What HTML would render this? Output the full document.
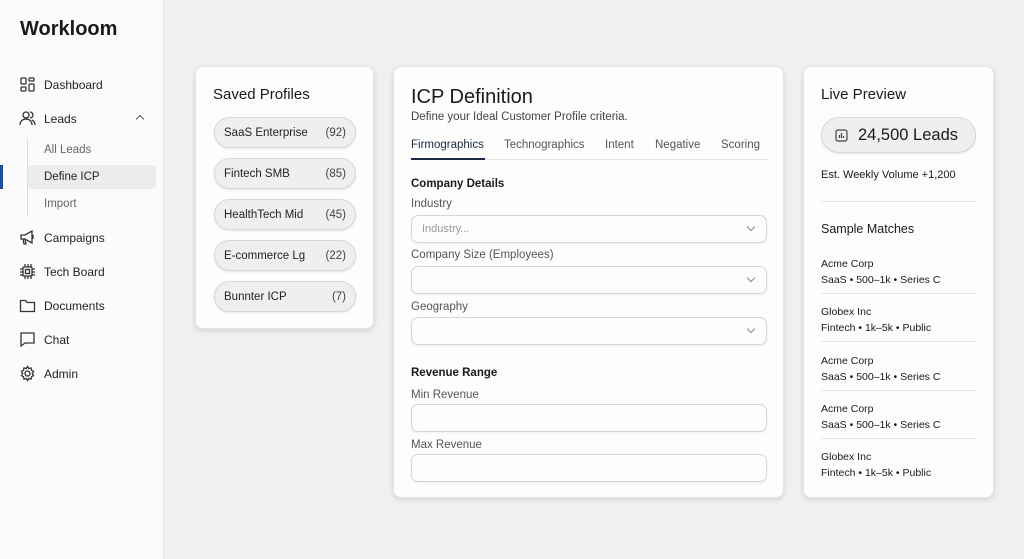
<!DOCTYPE html>
<html><head><meta charset="utf-8"><style>
*{box-sizing:border-box;margin:0;padding:0}
body{width:1024px;height:559px;overflow:hidden;background:#eef0f2;font-family:"Liberation Sans",sans-serif;color:#1a1a1a;position:relative}
.side{position:absolute;left:0;top:0;width:164px;height:559px;background:#fbfbfb;border-right:1px solid #e6e6e6}
.logo{position:absolute;left:20px;top:18px;font-size:20px;font-weight:bold}
.nav{position:absolute;left:0;width:160px;height:18px;font-size:12px;color:#222}
.nav svg{position:absolute;left:19px;top:0;width:17px;height:17px;fill:none;stroke:#333;stroke-width:1.3}
.nav span{position:absolute;left:44px;top:2px;white-space:nowrap}
.sub{position:absolute;left:44px;font-size:11.5px;color:#666}
.card{position:absolute;background:#fdfdfc;border-radius:8px;box-shadow:0 2px 6px rgba(0,0,0,.12);border:1px solid #e4e4e4}
.pill{position:absolute;left:18px;width:142px;height:31px;border-radius:16px;background:#efefee;border:1px solid #d8d8d8;box-shadow:0 1px 2px rgba(0,0,0,.1);font-size:11.5px;display:flex;justify-content:space-between;align-items:center;padding:0 9px 0 9px;color:#222}
.pill b{font-weight:normal;color:#444}
.lbl{position:absolute;left:17px;font-size:11.5px;color:#555}
.inp{position:absolute;left:17px;width:356px;height:28px;border:1px solid #d6d6d6;border-radius:7px;background:#fdfdfc;box-shadow:0 1px 2px rgba(0,0,0,.06);font-size:11px;color:#999;padding:7px 10px}
.inp i{position:absolute;right:12px;top:8px;width:6px;height:6px;border-right:1px solid #888;border-bottom:1px solid #888;transform:rotate(45deg)}
.h4{position:absolute;left:17px;font-size:11.5px;font-weight:bold}
.tab{position:absolute;top:72px;font-size:11.5px;color:#555;white-space:nowrap}
.m{position:absolute;left:17px;width:155px;font-size:10.5px;line-height:16px;border-bottom:1px solid #e4e4e4;padding-bottom:5px}
</style></head><body>
<div class="side">
<div class="logo">Workloom</div>
<div class="nav" style="top:76px"><svg viewBox="0 0 17 17"><rect x="2" y="2" width="5" height="6" rx="1"/><rect x="10" y="2" width="5" height="3" rx="1"/><rect x="2" y="11" width="5" height="4" rx="1"/><rect x="10" y="8" width="5" height="7" rx="1"/></svg><span>Dashboard</span></div>
<div class="nav" style="top:110px"><svg viewBox="0 0 17 17"><circle cx="7" cy="5" r="3"/><path d="M1 15c0-4 3-6 6-6s6 2 6 6M11 2a3 3 0 010 6M13 10c2 1 3 3 3 5"/></svg><span>Leads</span></div>
<div style="position:absolute;left:137px;top:116px;width:6px;height:6px;border-left:1px solid #555;border-top:1px solid #555;transform:rotate(45deg)"></div>
<div style="position:absolute;left:27px;top:138px;width:1px;height:78px;background:#ddd"></div>
<div class="sub" style="top:144px">All Leads</div>
<div style="position:absolute;left:28px;top:165px;width:128px;height:24px;background:#ececec;border-radius:3px"></div>
<div style="position:absolute;left:0;top:165px;width:3px;height:24px;background:#1d4fa0"></div>
<div class="sub" style="top:171px;color:#222">Define ICP</div>
<div class="sub" style="top:198px">Import</div>
<div class="nav" style="top:229px"><svg viewBox="0 0 17 17"><path d="M2 6h4l7-4v12l-7-4H2zM4 10l1 5h2l-1-5M14 6v4"/></svg><span>Campaigns</span></div>
<div class="nav" style="top:263px"><svg viewBox="0 0 17 17"><rect x="4" y="4" width="9" height="9" rx="1"/><rect x="6.5" y="6.5" width="4" height="4"/><path d="M6 1v3M9 1v3M12 1v3M6 13v3M9 13v3M12 13v3M1 6h3M1 9h3M1 12h3M13 6h3M13 9h3M13 12h3"/></svg><span>Tech Board</span></div>
<div class="nav" style="top:297px"><svg viewBox="0 0 17 17"><path d="M1.5 3.5h5l1.5 2h7.5v9h-14z"/></svg><span>Documents</span></div>
<div class="nav" style="top:331px"><svg viewBox="0 0 17 17"><path d="M2 2h13v10H6l-4 3z"/></svg><span>Chat</span></div>
<div class="nav" style="top:365px"><svg viewBox="0 0 17 17"><circle cx="8.5" cy="8.5" r="2.5"/><path d="M8.5 1.5l1.2 2 2.3-.6.5 2.3 2 1.2-1.2 2.1 1.2 2.1-2 1.2-.5 2.3-2.3-.6-1.2 2-1.2-2-2.3.6-.5-2.3-2-1.2 1.2-2.1-1.2-2.1 2-1.2.5-2.3 2.3.6z"/></svg><span>Admin</span></div>
</div>

<div class="card" style="left:195px;top:66px;width:179px;height:263px">
<div style="position:absolute;left:17px;top:19px;font-size:15px">Saved Profiles</div>
<div class="pill" style="top:50px">SaaS Enterprise<b>(92)</b></div>
<div class="pill" style="top:91px">Fintech SMB<b>(85)</b></div>
<div class="pill" style="top:132px">HealthTech Mid<b>(45)</b></div>
<div class="pill" style="top:173px">E-commerce Lg<b>(22)</b></div>
<div class="pill" style="top:214px">Bunnter ICP<b>(7)</b></div>
</div>

<div class="card" style="left:393px;top:66px;width:391px;height:432px">
<div style="position:absolute;left:17px;top:19px;font-size:20px">ICP Definition</div>
<div style="position:absolute;left:17px;top:44px;font-size:11.5px;color:#444">Define your Ideal Customer Profile criteria.</div>
<div class="tab" style="left:17px;color:#1a2a44">Firmographics</div>
<div class="tab" style="left:110px">Technographics</div>
<div class="tab" style="left:211px">Intent</div>
<div class="tab" style="left:261px">Negative</div>
<div class="tab" style="left:327px">Scoring</div>
<div style="position:absolute;left:17px;top:92px;width:357px;height:1px;background:#e3e3e3"></div>
<div style="position:absolute;left:17px;top:91px;width:74px;height:2px;background:#1a2a44"></div>
<div class="h4" style="top:111px">Company Details</div>
<div class="lbl" style="top:131px">Industry</div>
<div class="inp" style="top:148px">Industry...<i></i></div>
<div class="lbl" style="top:182px">Company Size (Employees)</div>
<div class="inp" style="top:199px"><i></i></div>
<div class="lbl" style="top:234px">Geography</div>
<div class="inp" style="top:250px"><i></i></div>
<div class="h4" style="top:300px">Revenue Range</div>
<div class="lbl" style="top:322px">Min Revenue</div>
<div class="inp" style="top:337px"></div>
<div class="lbl" style="top:372px">Max Revenue</div>
<div class="inp" style="top:387px"></div>
</div>

<div class="card" style="left:803px;top:66px;width:191px;height:432px">
<div style="position:absolute;left:17px;top:19px;font-size:15px">Live Preview</div>
<div style="position:absolute;left:17px;top:50px;width:155px;height:36px;border-radius:18px;background:#efefee;border:1px solid #d8d8d8;box-shadow:0 1px 2px rgba(0,0,0,.1)">
<svg style="position:absolute;left:13px;top:11px" width="13" height="13" viewBox="0 0 13 13" fill="none" stroke="#444" stroke-width="1.2"><rect x="1" y="1" width="11" height="11" rx="2"/><path d="M4.5 9V6M6.5 9V4M8.5 9V7"/></svg>
<div style="position:absolute;left:36px;top:8px;font-size:16.5px">24,500 Leads</div></div>
<div style="position:absolute;left:17px;top:102px;font-size:11px">Est. Weekly Volume +1,200</div>
<div style="position:absolute;left:17px;top:134px;width:155px;height:1px;background:#e3e3e3"></div>
<div style="position:absolute;left:17px;top:155px;font-size:12.5px">Sample Matches</div>
<div class="m" style="top:189px">Acme Corp<br>SaaS • 500–1k • Series C</div>
<div class="m" style="top:237px">Globex Inc<br>Fintech • 1k–5k • Public</div>
<div class="m" style="top:286px">Acme Corp<br>SaaS • 500–1k • Series C</div>
<div class="m" style="top:334px">Acme Corp<br>SaaS • 500–1k • Series C</div>
<div class="m" style="top:382px;border:none">Globex Inc<br>Fintech • 1k–5k • Public</div>
</div>
</body></html>
